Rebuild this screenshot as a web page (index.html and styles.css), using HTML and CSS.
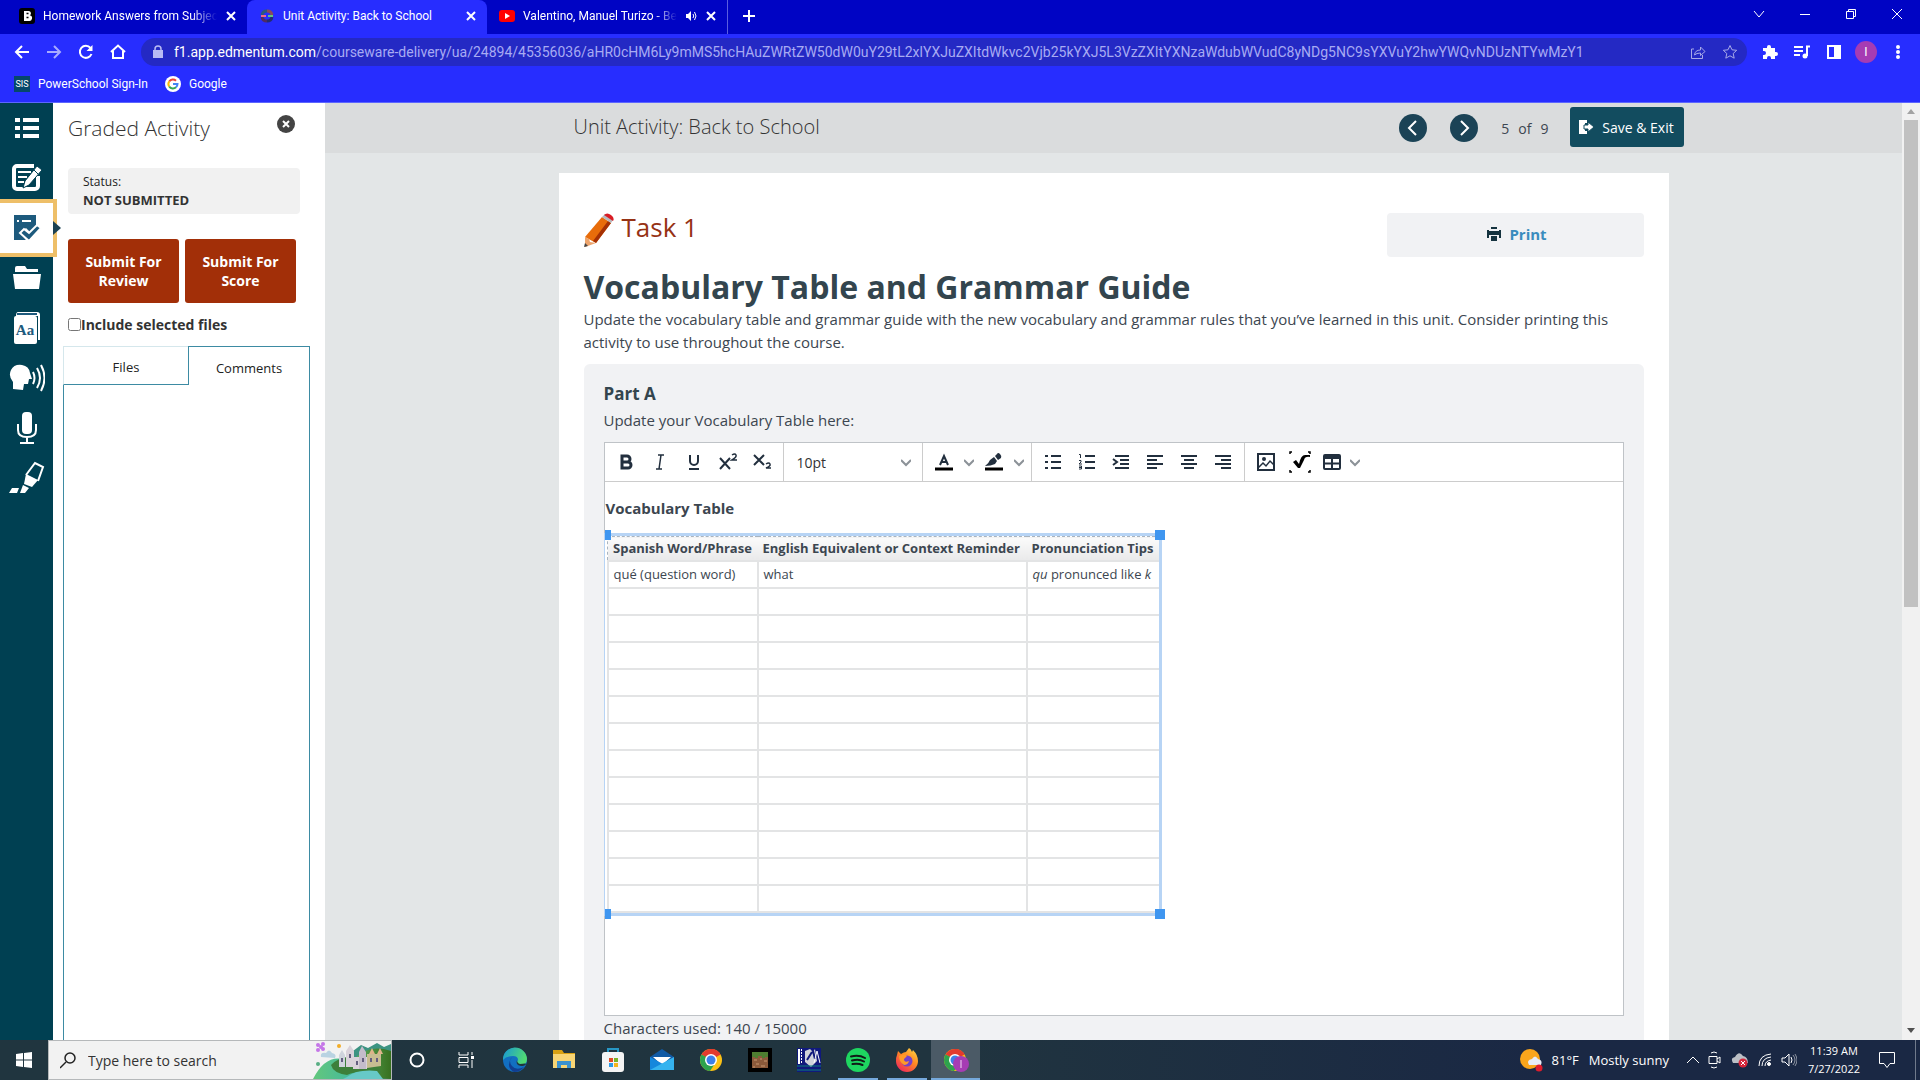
FILE: index.html
```html
<!DOCTYPE html>
<html lang="en">
<head>
<meta charset="utf-8">
<title>Unit Activity: Back to School</title>
<link rel="stylesheet" href="styles.css">
</head>
<body>
<header class="browser">
  <div class="tabstrip">
    <div class="tab">
      <svg class="favicon" viewBox="0 0 16 16"><rect width="16" height="16" rx="3" fill="#000"/><path d="M5 3h4.500a2.300 2.300 0 0 1 1.300 4.300A2.600 2.600 0 0 1 9.500 13H5z" fill="#fff"/><path d="M7.500 5.500h2M7.500 9.500h2" stroke="#000" stroke-width="1.500"/></svg>
      <span class="tab-title fade">Homework Answers from Subject</span>
      <button class="tab-close" aria-label="Close tab"><svg width="10" height="10" viewBox="0 0 10 10"><path d="M1 1l8 8M9 1l-8 8"/></svg></button>
    </div>
    <div class="tab active">
      <svg class="favicon" viewBox="0 0 16 16" fill="none" stroke-width="3"><path d="M3 7a5 5 0 0 1 5-4" stroke="#2c5a7c"/><path d="M8 3a5 5 0 0 1 5 4" stroke="#8a4a5a"/><path d="M13 9a5 5 0 0 1-5 4" stroke="#222c70"/><path d="M8 13a5 5 0 0 1-5-4" stroke="#4f2b63"/><path d="M2 8h5" stroke="#f0688f" stroke-width="2"/><path d="M9 8h5" stroke="#60c77c" stroke-width="2"/></svg>
      <span class="tab-title">Unit Activity: Back to School</span>
      <button class="tab-close" aria-label="Close tab"><svg width="10" height="10" viewBox="0 0 10 10"><path d="M1 1l8 8M9 1l-8 8"/></svg></button>
    </div>
    <div class="tab">
      <svg class="favicon" viewBox="0 0 16 16"><rect y="2" width="16" height="12" rx="3" fill="#f00"/><path d="M6 5l5 3-5 3z" fill="#fff"/></svg>
      <span class="tab-title fade">Valentino, Manuel Turizo - Be</span>
      <svg class="sound" width="12" height="12" viewBox="0 0 12 12"><path d="M1 4h2l3-3v10L3 8H1z" fill="#fff"/><path d="M8 4q1.500 2 0 4M9.500 2q3 4 0 8" stroke="#fff" fill="none"/></svg>
      <button class="tab-close" aria-label="Close tab"><svg width="10" height="10" viewBox="0 0 10 10"><path d="M1 1l8 8M9 1l-8 8"/></svg></button>
    </div>
    <button class="new-tab" aria-label="New tab"><svg width="12" height="12" viewBox="0 0 12 12"><path d="M6 0v12M0 6h12"/></svg></button>
    <div class="window-controls">
      <button aria-label="Search tabs"><svg width="12" height="12" viewBox="0 0 12 12"><path d="M1 3l5 6 5-6"/></svg></button>
      <button aria-label="Minimize"><svg width="12" height="12" viewBox="0 0 12 12"><path d="M1 6.500h10"/></svg></button>
      <button aria-label="Restore"><svg width="12" height="12" viewBox="0 0 12 12"><path d="M1.500 3.500h7v7h-7zM3.500 3.500v-2h7v7h-2"/></svg></button>
      <button aria-label="Close"><svg width="12" height="12" viewBox="0 0 12 12"><path d="M1 1l10 10M11 1L1 11"/></svg></button>
    </div>
  </div>
  <div class="navbar">
    <button aria-label="Back"><svg width="16" height="16" viewBox="0 0 16 16"><path d="M15 8H2M8 2L2 8l6 6"/></svg></button>
    <button class="dim" aria-label="Forward"><svg width="16" height="16" viewBox="0 0 16 16"><path d="M1 8h13M8 2l6 6-6 6"/></svg></button>
    <button aria-label="Reload"><svg width="16" height="16" viewBox="0 0 16 16"><path d="M13.500 10A6 6 0 1 1 12.500 4"/><path d="M14.500 1v6h-6z" fill="#fff" stroke="none"/></svg></button>
    <button aria-label="Home"><svg width="16" height="16" viewBox="0 0 16 16"><path d="M3 7v7h10V7M1 8l7-6.500L15 8"/></svg></button>
    <div class="address">
      <svg class="lock" width="10" height="14" viewBox="0 0 10 14"><path d="M0 5h10v8H0z" fill="#b9bbf4"/><path d="M2 5V4a3 3 0 0 1 6 0v1" stroke="#b9bbf4" stroke-width="1.500" fill="none"/></svg>
      <div class="url" role="textbox" aria-label="Address"><span class="host">f1.app.edmentum.com</span>/courseware-delivery/ua/24894/45356036/aHR0cHM6Ly9mMS5hcHAuZWRtZW50dW0uY29tL2xlYXJuZXItdWkvc2Vjb25kYXJ5L3VzZXItYXNzaWdubWVudC8yNDg5NC9sYXVuY2hwYWQvNDUzNTYwMzY1</div>
      <button class="dim" aria-label="Share"><svg width="16" height="16" viewBox="0 0 16 16"><path d="M4 5H1.500v9.500h11V11M4.500 11q.5-5 6-5V3l4.500 4.500-4.500 4V9q-4 0-6 2z"/></svg></button>
      <button class="dim" aria-label="Bookmark"><svg width="16" height="16" viewBox="0 0 16 16"><path d="M8 1.500l2 4.300 4.700.5-3.500 3.200 1 4.700L8 11.800l-4.200 2.400 1-4.700L1.300 6.300 6 5.800z"/></svg></button>
    </div>
    <button aria-label="Extensions"><svg width="16" height="16" viewBox="0 0 16 16"><path d="M1 4h4V3a2 2 0 0 1 4 0v1h4v4h1a2 2 0 0 1 0 4h-1v3H9v-1a2 2 0 0 0-4 0v1H1v-4h1a2 2 0 0 0 0-4H1z" fill="#fff" stroke="none"/></svg></button>
    <button aria-label="Media"><svg width="16" height="16" viewBox="0 0 16 16"><path d="M0 3h9M0 7h9M0 11h6M13 12V2.500h3"/><circle cx="11" cy="12" r="2.500" fill="#fff" stroke="none"/></svg></button>
    <button aria-label="Side panel"><svg width="16" height="16" viewBox="0 0 16 16"><path d="M2 2h12v12H2z"/><path d="M9 2h5v12H9z" fill="#fff"/></svg></button>
    <button aria-label="Profile"><span class="avatar">I</span></button>
    <button aria-label="Menu"><svg width="16" height="16" viewBox="0 0 16 16" fill="#fff"><circle cx="8" cy="3" r="1" /><circle cx="8" cy="8" r="1"/><circle cx="8" cy="13" r="1"/></svg></button>
  </div>
  <nav class="bookmarks">
    <a href="#"><span class="sis">SIS</span>PowerSchool Sign-In</a>
    <a href="#"><svg width="16" height="16" viewBox="0 0 16 16"><circle cx="8" cy="8" r="8" fill="#fff"/><g fill="none" stroke-width="2"><path d="M4.200 5.500A4.500 4.500 0 0 1 11 4.700" stroke="#ea4335"/><path d="M4.200 10.500a4.500 4.500 0 0 1 0-5" stroke="#fbbc05"/><path d="M4.200 10.500A4.500 4.500 0 0 0 11 11.300" stroke="#34a853"/><path d="M8 8h4.500a4.500 4.500 0 0 1-1.500 3.300" stroke="#4285f4"/></g></svg>Google</a>
  </nav>
</header>

<main class="app">
  <nav class="rail">
    <button aria-label="Outline"><svg width="24" height="22" viewBox="0 0 24 22" fill="#fff"><path d="M0 1h5v4H0zM8 1h16v4H8zM0 9h5v4H0zM8 9h16v4H8zM0 17h5v4H0zM8 17h16v4H8z"/></svg></button>
    <button aria-label="Notes"><svg width="32" height="30" viewBox="0 0 32 30"><path d="M23 3H6a3 3 0 0 0-3 3v17a3 3 0 0 0 3 3h18a3 3 0 0 0 3-3V13" fill="none" stroke="#fff" stroke-width="4"/><path d="M7 9h13M7 14h9M7 19h6" stroke="#fff" stroke-width="2"/><path d="M26 3l5 4-13 15-6 3 2-7z" fill="#fff" stroke="#004052"/><path d="M23 7l4 4" stroke="#004052"/></svg></button>
    <button class="current" aria-label="Graded activity"><svg width="28" height="28" viewBox="0 0 28 28"><path d="M1 1h22v11l-6 6-4-4-6 5 6 7H1z" fill="#1d5a7d"/><path d="M4 7h2M9 7h9" stroke="#fff" stroke-width="2"/><path d="M7 19l4-4 5 4 8-8 4 3-12 13z" fill="#1d5a7d" stroke="#fff" stroke-width="2"/></svg></button>
    <button aria-label="Files"><svg width="30" height="26" viewBox="0 0 30 26" fill="#fff"><path d="M3 5V3q0-2 2-2h8l2 3h11v3H3zM1 9h28l-2 15H3z"/></svg></button>
    <button aria-label="Dictionary"><svg width="28" height="34" viewBox="0 0 28 34"><path d="M5 1h19q3 0 3 3v25h-2V5H3q0-4 2-4z" fill="#fff"/><path d="M4 3h20" stroke="#1d5a7d" stroke-width="2"/><rect x="1" y="5" width="23" height="28" rx="2" fill="#fff"/><text x="12" y="24" text-anchor="middle" class="aa">Aa</text></svg></button>
    <button aria-label="Read aloud"><svg width="36" height="30" viewBox="0 0 36 30"><path d="M4 26v-7Q-1 13 2 7q3-6 11-5 7 1 8 8l2 6h-3l-1 5h-4l-1 6z" fill="#fff"/><path d="M24 9q3 6 0 12M28 5q6 10 0 20M32 2q7 13 0 26" fill="none" stroke="#fff" stroke-width="2"/></svg></button>
    <button aria-label="Record"><svg width="22" height="34" viewBox="0 0 22 34"><rect x="6" y="1" width="10" height="22" rx="4" fill="#fff"/><path d="M2 13v6q0 7 9 7t9-7v-6M11 26v6M4 32h14" fill="none" stroke="#fff" stroke-width="2"/></svg></button>
    <button aria-label="Highlighter"><svg width="36" height="34" viewBox="0 0 36 34"><path d="M17 14L26 2l8 4-5 14" fill="none" stroke="#fff" stroke-width="2"/><path d="M17 13l12 6-6 7-8-3z" fill="#fff"/><path d="M14 24l6 3-4 5h-5zM3 27h7l-2 5H0z" fill="#fff"/></svg></button>
  </nav>

  <aside class="panel">
    <div class="panel-head">
      <h2>Graded Activity</h2>
      <button aria-label="Close panel"><svg width="18" height="18" viewBox="0 0 18 18"><circle cx="9" cy="9" r="9" fill="#444"/><path d="M6 6l6 6M12 6l-6 6" stroke="#fff" stroke-width="2"/></svg></button>
    </div>
    <div class="status"><span>Status:</span><strong>NOT SUBMITTED</strong></div>
    <div class="submit-row"><button>Submit For Review</button><button>Submit For Score</button></div>
    <label class="include"><input type="checkbox">Include selected files</label>
    <div class="panel-tabs"><button>Files</button><button class="selected">Comments</button></div>
    <div class="panel-body"></div>
  </aside>

  <section class="content">
    <header class="page-head">
      <div class="head-inner">
        <h1>Unit Activity: Back to School</h1>
        <button class="round" aria-label="Previous"><svg width="28" height="28" viewBox="0 0 28 28"><path d="M17 7l-7 7 7 7"/></svg></button>
        <button class="round" aria-label="Next"><svg width="28" height="28" viewBox="0 0 28 28"><path d="M11 7l7 7-7 7"/></svg></button>
        <span class="count"><span>5</span><span>of</span><span>9</span></span>
        <button class="save"><svg width="15" height="14" viewBox="0 0 15 14" fill="#fff"><path d="M0 0h8v3H6v8h2v3H0z"/><path d="M5 5h4V2l6 5-6 5V9H5z" stroke="#124c5f"/></svg>Save &amp; Exit</button>
      </div>
    </header>
    <article class="sheet">
      <div class="task-row">
        <h2><svg width="30" height="34" viewBox="0 0 30 34"><path d="M1 24L18 4l9 6-15 20z" fill="#e86c0a"/><path d="M9 28L24 8l3 2-15 20z" fill="#a53005"/><path d="M1 24l4 2 1 3 6 1-11 4z" fill="#eda46c"/><path d="M18 4l3-3 8 6-2 3z" fill="#b8b8bd"/><path d="M20 2q3-3 7 0t2 6z" fill="#d91c24"/><path d="M0 34l1-4 3 3z" fill="#444"/></svg>Task 1</h2>
        <button class="print"><svg width="14" height="14" viewBox="0 0 14 14" fill="#15333f"><path d="M4 0h6v2H4zM0 3h2v1h10V3h2v8h-2V8H2v3H0zM4 9h6v5H4z"/><path d="M2 4h10v3H2z"/></svg>Print</button>
      </div>
      <h3>Vocabulary Table and Grammar Guide</h3>
      <p class="intro">Update the vocabulary table and grammar guide with the new vocabulary and grammar rules that you’ve learned in this unit. Consider printing this activity to use throughout the course.</p>
      <div class="part">
        <h4>Part A</h4>
        <p>Update your Vocabulary Table here:</p>
        <div class="editor">
          <div class="toolbar">
            <div class="group">
              <button aria-label="Bold"><svg width="24" height="24" viewBox="0 0 24 24"><path d="M8 6h5a3 3 0 0 1 0 6H8zM8 12h6a3 3 0 0 1 0 6H8z" stroke-width="3"/></svg></button>
              <button aria-label="Italic"><svg width="24" height="24" viewBox="0 0 24 24"><path d="M10 5h6M8 19h6M13 5l-2 14" stroke-width="1.500"/></svg></button>
              <button aria-label="Underline"><svg width="24" height="24" viewBox="0 0 24 24"><path d="M8 5v6a4 4 0 0 0 8 0V5M7 19h10"/></svg></button>
              <button aria-label="Superscript"><svg width="24" height="24" viewBox="0 0 24 24"><path d="M4 8l10 11M14 8L4 19"/><path d="M16 5q3-2 4 0t-4 5h5" stroke-width="1.500"/></svg></button>
              <button aria-label="Subscript"><svg width="24" height="24" viewBox="0 0 24 24"><path d="M4 5l10 10M14 5L4 15"/><path d="M16 14q3-2 4 0t-4 4h5" stroke-width="1.500"/></svg></button>
            </div>
            <div class="group size">
              <select aria-label="Font size"><option>10pt</option></select>
              <svg width="10" height="10" viewBox="0 0 10 10"><path d="M0 3l5 5 5-5"/></svg>
            </div>
            <div class="group">
              <button aria-label="Text colour"><svg width="24" height="24" viewBox="0 0 24 24"><path d="M3 19h18" stroke="#000" stroke-width="3"/><path d="M8 15l4-9 4 9M10 12h5"/></svg></button>
              <button class="more" aria-label="More text colours"><svg width="10" height="10" viewBox="0 0 10 10"><path d="M0 3l5 5 5-5"/></svg></button>
              <button aria-label="Highlight colour"><svg width="24" height="24" viewBox="0 0 24 24"><path d="M3 19h18" stroke="#000" stroke-width="3"/><path d="M13 6l3 4 3-2q1-2-1-4t-3 0zM12 7l3 4-2 3q-4 2-10 2 4-3 5-6z" fill="#222f3e" stroke="none"/></svg></button>
              <button class="more" aria-label="More highlight colours"><svg width="10" height="10" viewBox="0 0 10 10"><path d="M0 3l5 5 5-5"/></svg></button>
            </div>
            <div class="group">
              <button aria-label="Bullet list"><svg width="24" height="24" viewBox="0 0 24 24"><path d="M4 6h3M4 12h3M4 18h3M10 6h10M10 12h10M10 18h10"/></svg></button>
              <button aria-label="Numbered list"><svg width="24" height="24" viewBox="0 0 24 24"><path d="M10 6h10M10 12h10M10 18h10"/><path d="M4 4.500h1.500V8M4 10.500h2v1.500L4 14h3M4 16h2.500v3H4M4 17.500h2" stroke-width="1"/></svg></button>
              <button aria-label="Indent"><svg width="24" height="24" viewBox="0 0 24 24"><path d="M6 6h14M11 10h9M11 14h9M6 18h14M4 9l4 3-4 3"/></svg></button>
              <button aria-label="Align left"><svg width="24" height="24" viewBox="0 0 24 24"><path d="M4 6h16M4 10h10M4 14h16M4 18h10"/></svg></button>
              <button aria-label="Align centre"><svg width="24" height="24" viewBox="0 0 24 24"><path d="M4 6h16M7 10h10M4 14h16M7 18h10"/></svg></button>
              <button aria-label="Align right"><svg width="24" height="24" viewBox="0 0 24 24"><path d="M4 6h16M10 10h10M4 14h16M10 18h10"/></svg></button>
            </div>
            <div class="group insert">
              <button aria-label="Insert image"><svg width="24" height="24" viewBox="0 0 24 24"><path d="M4 4h16v16H4z"/><circle cx="10" cy="9" r="2" fill="#222f3e" stroke="none"/><path d="M4 18l5-5 3 3 4-5 4 4" stroke-width="1.500"/></svg></button>
              <button aria-label="Insert formula"><svg width="24" height="24" viewBox="0 0 24 24"><path d="M2 4V2h2M20 2h2v2M2 20v2h2M20 22h2v-2" stroke="#000" stroke-width="1.500"/><path d="M5 12l3-2 3 4q2-10 7-9h4v2q-5-1-6 3l-4 8h-2z" fill="#000" stroke="none"/></svg></button>
              <button class="narrow" aria-label="Insert table"><svg width="24" height="24" viewBox="0 0 24 24"><rect x="4" y="5" width="16" height="14" rx="1"/><path d="M4 7h16" stroke-width="4"/><path d="M12 8v11M4 13.500h16"/></svg></button>
              <button class="more" aria-label="Table options"><svg width="10" height="10" viewBox="0 0 10 10"><path d="M0 3l5 5 5-5"/></svg></button>
            </div>
          </div>
          <div class="document">
            <h5>Vocabulary Table</h5>
            <div class="table-wrap">
              <table>
                <colgroup><col class="c-word"><col class="c-english"><col class="c-tips"></colgroup>
                <thead><tr><th>Spanish Word/Phrase</th><th>English Equivalent or Context Reminder</th><th>Pronunciation Tips</th></tr></thead>
                <tbody>
                  <tr><td>qué (question word)</td><td>what</td><td><i>qu</i> pronunced like <i>k</i></td></tr>
                  <tr><td></td><td></td><td></td></tr>
                  <tr><td></td><td></td><td></td></tr>
                  <tr><td></td><td></td><td></td></tr>
                  <tr><td></td><td></td><td></td></tr>
                  <tr><td></td><td></td><td></td></tr>
                  <tr><td></td><td></td><td></td></tr>
                  <tr><td></td><td></td><td></td></tr>
                  <tr><td></td><td></td><td></td></tr>
                  <tr><td></td><td></td><td></td></tr>
                  <tr><td></td><td></td><td></td></tr>
                  <tr><td></td><td></td><td></td></tr>
                  <tr><td></td><td></td><td></td></tr>
                </tbody>
              </table>
              <div class="frame"></div>
              <span class="handle tl"></span><span class="handle tr"></span><span class="handle bl"></span><span class="handle br"></span>
            </div>
          </div>
        </div>
        <p class="used">Characters used: 140 / 15000</p>
      </div>
    </article>
  </section>
  <div class="scrollbar">
    <svg width="18" height="17" viewBox="0 0 18 17"><path d="M5 11l4-5 4 5z" fill="#a3a3a3"/></svg>
    <div class="thumb"></div>
    <svg width="18" height="17" viewBox="0 0 18 17"><path d="M5 6l4 5 4-5z" fill="#505050"/></svg>
  </div>
</main>

<footer class="taskbar">
  <button class="start" aria-label="Start"><svg width="16" height="16" viewBox="0 0 16 16" fill="#fff"><path d="M0 2l7-1v6.500H0zM8 1l8-1v7.500H8zM0 8.500h7V15l-7-1zM8 8.500h8V16l-8-1z"/></svg></button>
  <label class="search">
    <svg width="16" height="17" viewBox="0 0 16 17"><circle cx="10" cy="6" r="5" fill="none" stroke="#222" stroke-width="1.500"/><path d="M6 10l-6 6" stroke="#222" stroke-width="1.500"/></svg>
    <input type="text" placeholder="Type here to search" aria-label="Search">
    <svg class="castle" width="78" height="38" viewBox="0 0 78 38"><defs><linearGradient id="hill" x2="1"><stop stop-color="#5fae62"/><stop offset="1" stop-color="#37701f"/></linearGradient><linearGradient id="river" x2="1"><stop stop-color="#63c77c"/><stop offset="1" stop-color="#2fb0b4"/></linearGradient></defs><path d="M30 22l10-12 8-6 7 3 9-5 7 4 7-3v35H30z" fill="#3c9382"/><path d="M40 36V20q14-18 38-10v28z" fill="url(#hill)"/><path d="M0 38Q12 14 30 18l18 10q16 0 19 10z" fill="url(#river)"/><path d="M18 24q12-12 28-6 20 2 22 14-22-4-34 2-14-2-16-10z" fill="#3d7f3a"/><path d="M26 14l3-5 3 5v12h-6z" fill="#cfd4dc"/><path d="M33 10l4-6 4 6v16h-8zM40 16h14v12H40z" fill="#d9d2da"/><path d="M46 11l3-6 4 6v17h-7z" fill="#c4bccb"/><path d="M54 13h14v12l-14 2z" fill="#c8bd92"/><path d="M56 13l3-6 3 6zM64 13l3-6 3 6z" fill="#ddb48a"/><path d="M29 17v4M37 13v4M44 20v4M50 17v4M58 17v4M64 17v4" stroke="#645e80" stroke-width="2"/><path d="M34 36q10-8 30-6l6 8H30z" fill="#67c9c7"/><path d="M8 16q-1-5 5-4 3-5 6 0 5 1 3 5z" fill="#b9d3e2"/><g fill="#c575e8"><circle cx="5" cy="4" r="2"/><circle cx="10" cy="3" r="2"/><circle cx="5" cy="9" r="2"/><circle cx="10" cy="8" r="2"/><circle cx="8" cy="6" r="2"/></g><circle cx="26" cy="5" r="2" fill="#f3ad28"/><circle cx="5" cy="23" r="2" fill="#58ae84"/></svg>
  </label>
  <div class="pinned">
    <button aria-label="Cortana"><svg width="16" height="16" viewBox="0 0 16 16"><circle cx="8" cy="8" r="6.500" fill="none" stroke="#fff" stroke-width="2"/></svg></button>
    <button aria-label="Task view"><svg width="18" height="16" viewBox="0 0 18 16"><path d="M2 0v3h9V0M2 16v-3h9v3M2 5.500h9v5H2zM15 0v3M15 8v8" fill="none" stroke="#fff" stroke-width="1"/><path d="M14 4h3v3h-3z" fill="#fff"/></svg></button>
    <button aria-label="Edge"><svg width="26" height="26" viewBox="0 0 26 26"><defs><linearGradient id="edge" x2="1" y2=".3"><stop stop-color="#1797d6"/><stop offset="1" stop-color="#50da74"/></linearGradient></defs><circle cx="13" cy="13" r="12" fill="#126fc1"/><path d="M1 13A12 12 0 0 1 25 12q0 6-7 6-5-1-2-5 0-4-5-4Q4 9 1 13z" fill="url(#edge)"/><path d="M10 10q-4 4 0 9 4 5 12 1-4 5-10 5Q3 20 10 10z" fill="#123e91"/><path d="M15 13q-2 5 4 6 4 0 5-2 0-1-6 0-3-1-3-4z" fill="#20343e"/></svg></button>
    <button aria-label="File Explorer"><svg width="24" height="22" viewBox="0 0 24 22"><path d="M1 1h9l2 3h11v5H1z" fill="#d9a113"/><path d="M1 5h22v14H1z" fill="#f8d574"/><path d="M5 19v-7h14v7h-4v-3H9v3z" fill="#3c92cf"/></svg></button>
    <button aria-label="Store"><svg width="24" height="26" viewBox="0 0 24 26"><path d="M7 7V2h10v5" fill="none" stroke="#2797c5" stroke-width="2"/><rect x="1" y="5" width="22" height="20" rx="3" fill="#f4f4f4"/><path d="M8 11h4v4H8z" fill="#e34b25"/><path d="M13 11h4v4h-4z" fill="#79b528"/><path d="M8 16h4v4H8z" fill="#2c9be8"/><path d="M13 16h4v4h-4z" fill="#f5b51b"/></svg></button>
    <button aria-label="Mail"><svg width="24" height="24" viewBox="0 0 24 24"><path d="M0 9l12-8 12 8v13H0z" fill="#105aa5"/><path d="M3 9h18l-9 8z" fill="#fff"/><path d="M0 9l24 13H0z" fill="#1587dc"/><path d="M24 9L0 22h24z" fill="#35b3ef"/></svg></button>
    <button aria-label="Chrome"><svg width="24" height="24" viewBox="0 0 24 24"><g id="chrome-mark"><circle cx="12" cy="12" r="11" fill="#fbc116"/><path d="M12 12L2.500 6.500A11 11 0 0 1 21.500 6.500z" fill="#e33b2e"/><path d="M12 1a11 11 0 0 1 9.500 5.500H12z" fill="#e33b2e"/><path d="M2.500 6.500A11 11 0 0 0 11 23l6-9z" fill="#2da34d"/><circle cx="12" cy="12" r="6" fill="#fff"/><circle cx="12" cy="12" r="4.500" fill="#3c80ea"/></g></svg></button>
    <button aria-label="Minecraft"><svg width="24" height="24" viewBox="0 0 24 24"><path d="M0 0h24v24H0z"/><path d="M4 8h16v12H4z" fill="#8b5a3b"/><path d="M4 4h16v5h-3v1h-3V8h-4v2H7V9H4z" fill="#4e7d30"/><path d="M6 12h3M12 11h2M16 13h3M8 16h3M13 18h4M5 19h2" stroke="#a97855" stroke-width="2"/></svg></button>
    <button aria-label="Drawing tools"><svg width="24" height="24" viewBox="0 0 24 24"><path d="M0 0h24v24H0z" fill="#10197c"/><path d="M2 1v15M4 2h1M4 5h1M4 8h1M4 11h1M4 14h1" stroke="#fff" stroke-width="2"/><path d="M8 3l5-2 3 3 2-3 2 12-6 6-6-5z" fill="#d0d3da"/><path d="M10 12l5-8M16 3l2 8" stroke="#10197c" stroke-width="2"/><path d="M20 3l3 12M20 3l-3 12" stroke="#fff"/><path d="M0 18h24M0 22h24" stroke="#0c8078" stroke-width="1"/></svg></button>
    <button class="running" aria-label="Spotify"><svg width="24" height="24" viewBox="0 0 24 24"><circle cx="12" cy="12" r="12" fill="#1ed760"/><path d="M5 8.500q8-2 14 1.500M6 12.500q7-2 12 1M6.500 16q6-1 10 1" fill="none" stroke="#101c17" stroke-width="2" stroke-linecap="round"/></svg></button>
    <button class="running" aria-label="Firefox"><svg width="24" height="24" viewBox="0 0 24 24"><defs><linearGradient id="fox" x1="1" y2="1" x2=".3"><stop stop-color="#ffe14a"/><stop offset=".5" stop-color="#ff8a22"/><stop offset="1" stop-color="#f02d58"/></linearGradient></defs><path d="M2 7l1-4 3 3q3-2 5-2l3-4q2 1 3 4l1-2q5 5 5 11a11 11 0 0 1-22 0q0-4 1-6z" fill="url(#fox)"/><circle cx="12" cy="13" r="5.500" fill="#7541c9"/><path d="M4 8q5-3 8 0l-3 3q0 4 5 2-1 4-5 4-5-3-5-9z" fill="#ff9a28"/></svg></button>
    <button class="running current" aria-label="Chrome profile window"><svg width="26" height="24" viewBox="0 0 26 24"><use href="#chrome-mark"/><circle cx="18" cy="16" r="8" fill="#a63cb3"/><path d="M18 12v8" stroke="#f2d9f4"/></svg></button>
  </div>
  <div class="tray">
    <svg width="24" height="24" viewBox="0 0 24 24"><circle cx="11" cy="11" r="10" fill="#f9a51c"/><path d="M10 17q-3-5 3-6 3-5 6 0 5 1 3 6z" fill="#e7ebf6"/><circle cx="20" cy="20" r="3.500" fill="#dd1c2c"/></svg>
    <span class="weather"><span>81°F</span><span>Mostly sunny</span></span>
    <svg width="12" height="12" viewBox="0 0 12 12" class="line"><path d="M0 9l6-6 6 6"/></svg>
    <svg width="14" height="18" viewBox="0 0 14 18" class="line"><path d="M1 5.500h8v7H1zM9 8l3-2v6l-3-2M3 2q3-2 6 0M3 16q3 2 6 0"/></svg>
    <svg width="18" height="16" viewBox="0 0 18 16"><path d="M2 11q-3-5 2-6 4-7 8-1 5 1 5 7z" fill="#bcc0c6"/><circle cx="12" cy="11" r="4.500" fill="#d6263b"/><path d="M10 9l4 4M14 9l-4 4" stroke="#fff"/></svg>
    <svg width="14" height="14" viewBox="0 0 14 14" class="line"><path d="M1 13Q1 2 13 1M4 13q0-8 9-9M7 13q0-5 6-6"/><circle cx="11" cy="11" r="1.500" fill="#fff"/></svg>
    <svg width="16" height="14" viewBox="0 0 16 14" class="line"><path d="M1 5h3l4-4v12L4 9H1zM10 4q2 3 0 6"/><path d="M12 2q4 5 0 10M14 1q4 6 0 12" opacity=".5"/></svg>
    <time class="clock"><span>11:39 AM</span><span>7/27/2022</span></time>
    <svg width="16" height="16" viewBox="0 0 16 16" class="line"><path d="M.5.500h15v11H11l-3 4-3-4H.500z"/></svg>
  </div>
  <button class="show-desktop" aria-label="Show desktop"></button>
</footer>
</body>
</html>
```
FILE: styles.css
```css
* { box-sizing: border-box; }
body { margin: 0; height: 100vh; display: flex; flex-direction: column; overflow: hidden; font-family: "Open Sans", "Noto Sans", sans-serif; color: #3c4650; }
h1, h2, h3, h4, h5, p { margin: 0; }
button { font: inherit; border: 0; padding: 0; background: none; color: inherit; display: flex; align-items: center; justify-content: center; }
svg { flex: none; display: block; }

/* Browser */
.browser { flex: none; background: #272dff; color: #fff; font-family: Roboto, "Open Sans", sans-serif; font-size: 12px; border-bottom: 1px solid #5c66ff; }
.browser button svg { stroke: #fff; fill: none; stroke-width: 2; }
.tabstrip { height: 34px; background: #0004c4; display: flex; align-items: stretch; padding-left: 7px; }
.tab { width: 240px; display: flex; align-items: center; gap: 8px; padding: 0 10px 2px 12px; }
.tab.active { background: #272dff; border-radius: 8px 8px 0 0; }
.favicon { width: 16px; height: 16px; }
.tab-title { flex: 1; white-space: nowrap; overflow: hidden; }
.fade { -webkit-mask-image: linear-gradient(90deg, #000 85%, transparent); mask-image: linear-gradient(90deg, #000 85%, transparent); }
.tab-close { width: 12px; }
.new-tab { width: 42px; padding-bottom: 2px; border-left: 1px solid #5a5ee0; }
.window-controls { margin-left: auto; display: flex; padding-bottom: 6px; }
.window-controls button { width: 46px; }
.browser .window-controls svg { stroke-width: 1; }
.navbar { height: 36px; display: flex; align-items: center; padding: 0 6px; }
.navbar button { width: 32px; height: 28px; }
.navbar .dim { opacity: .6; }
.address { flex: 1; min-width: 0; height: 28px; border-radius: 14px; background: #2429c4; display: flex; align-items: center; margin: 0 7px; padding: 0 1px 0 12px; }
.address .dim svg { stroke-width: 1; }
.url { flex: 1; min-width: 0; margin-left: 11px; font-size: 14px; white-space: nowrap; overflow: hidden; color: #a8abf3; }
.host { color: #fff; }
.avatar { width: 22px; height: 22px; border-radius: 50%; background: #a63cb3; font-size: 12px; line-height: 22px; }
.bookmarks { height: 32px; display: flex; align-items: center; gap: 17px; padding: 0 0 4px 14px; }
.bookmarks a { color: #fff; text-decoration: none; display: flex; align-items: center; gap: 8px; }
.sis { width: 16px; height: 16px; background: #05476b; font-size: 9px; line-height: 16px; text-align: center; }

/* App shell */
.app { flex: 1; min-height: 0; display: flex; }
.rail { flex: none; width: 53px; background: #004052; display: flex; flex-direction: column; position: relative; z-index: 1; }
.rail button { height: 50px; }
.rail .current { position: relative; background: #fff; outline: 4px solid #eebf68; }
.rail .current::after { content: ""; position: absolute; left: 100%; top: 18px; border: 7px solid transparent; border-left: 8px solid #1b4153; border-right: 0; }
.aa { font: bold 15px "Liberation Serif", serif; fill: #1d5a7d; }

.panel { flex: none; width: 272px; background: #fff; display: flex; flex-direction: column; padding: 0 15px 0 10px; }
.panel-head { display: flex; justify-content: space-between; padding: 12px 15px 0 5px; height: 65px; align-items: flex-start; }
.panel-head h2 { font-size: 21px; line-height: 26px; font-weight: 300; color: #333; }
.status { margin: 0 10px 0 5px; height: 46px; border-radius: 4px; background: #f1f1f1; padding: 5px 15px; display: flex; flex-direction: column; font-size: 12px; line-height: 18px; color: #222; }
.status strong { font-size: 13px; color: #333; }
.submit-row { display: flex; gap: 6px; margin: 25px 14px 0 5px; }
.submit-row button { flex: 1; height: 64px; border-radius: 3px; background: #a22f08; color: #fff; font-size: 14px; font-weight: 700; line-height: 19px; padding: 0 16px; }
.include { display: flex; align-items: center; margin: 10px 0 0 5px; height: 22px; font-size: 14px; font-weight: 700; color: #333; }
.include input { margin: 0; width: 13px; height: 13px; }
.panel-tabs { display: flex; margin-top: 11px; height: 39px; }
.panel-tabs button { width: 125px; font-size: 13px; padding-top: 3px; color: #222; border: 1px solid #d5e7ec; border-bottom-color: #3d8ba3; border-right: 0; }
.panel-tabs .selected { flex: 1; border: 1px solid #3d8ba3; border-bottom: 0; }
.panel-body { flex: 1; border: 1px solid #3d8ba3; border-width: 0 1px; }

.content { flex: 1; min-width: 0; background: #e3e6e7; display: flex; flex-direction: column; overflow: hidden; }
.page-head { flex: none; height: 50px; background: #dadcdd; }
.head-inner { max-width: 1110px; margin: 0 auto; height: 50px; padding-left: 15px; display: flex; align-items: center; }
.head-inner h1 { flex: 1; font-size: 20px; line-height: 26px; padding-bottom: 2px; font-weight: 300; color: #333; }
.round { width: 28px; height: 28px; border-radius: 50%; background: #1b4356; margin-right: 23px; }
.round svg { fill: none; stroke: #fff; stroke-width: 2; }
.count { display: flex; gap: 9px; font-size: 14px; margin-right: 21px; }
.save { height: 40px; width: 114px; margin: 0 -15px 6px 0; align-self: flex-end; border-radius: 3px; background: #124c5f; color: #fff; font-size: 14px; gap: 8px; }
.sheet { flex: none; width: 100%; max-width: 1110px; margin: 20px auto 0; background: #fff; padding: 40px 25px; }
.task-row { display: flex; justify-content: space-between; height: 44px; }
.task-row h2 { display: flex; gap: 8px; align-items: flex-start; font-size: 26px; line-height: 28px; font-weight: 400; color: #963214; }
.print { width: 257px; background: #f1f2f4; border-radius: 4px; color: #3a8cbe; font-size: 15px; font-weight: 700; gap: 8px; padding: 0 0 2px 4px; }
.sheet h3 { margin-top: 8px; font-size: 32px; line-height: 43px; color: #33454e; }
.intro { font-size: 15px; line-height: 23px; }
.part { margin-top: 10px; background: #f1f2f4; border-radius: 6px; padding: 17px 20px 30px; font-size: 15px; line-height: 26px; }
.part h4 { font-size: 17px; line-height: 26px; color: #33454e; }
.editor { margin-top: 9px; border: 1px solid #bfc3c7; background: #fff; }
.toolbar { display: flex; height: 39px; border-bottom: 1px solid #ccc; }
.group { display: flex; align-items: stretch; padding: 0 4px; border-right: 1px solid #ccc; }
.group:last-child { border-right: 0; }
.group button { width: 34px; }
.group svg { fill: none; stroke: #222f3e; stroke-width: 2; }
.group .narrow { width: 30px; }
.group .more { width: 16px; }
.group .more svg, .size svg { stroke: #8c9298; }
.size { width: 139px; align-items: center; padding: 0 11px 0 13px; }
.size select { flex: 1; appearance: none; border: 0; background: none; padding: 0; font: 14px "Open Sans", sans-serif; color: #333; }
.document { min-height: 533px; padding: 13px 1px; }
.document h5 { font-size: 15px; line-height: 26px; color: #3c4650; }
.table-wrap { position: relative; width: 552px; margin: 15px 0 0 1px; }
table { width: 100%; table-layout: fixed; border-collapse: collapse; font-size: 13px; line-height: 18px; }
.c-word { width: 150px; }
.c-english { width: 269px; }
.c-tips { width: 133px; }
th, td { height: 27px; padding: 0 5px; text-align: left; white-space: nowrap; }
th { height: 24px; background: linear-gradient(#fbfbfb, #e9e9ea); border-top: 1px dashed #a9b4bf; }
th:first-child { border-left: 1px dashed #a9b4bf; }
th:last-child { border-right: 1px dashed #a9b4bf; }
td { border: 2px solid #e3e4e5; }
.frame { position: absolute; inset: -3px; border: 3px solid #b7d4f5; border-left-width: 1px; }
.handle { position: absolute; width: 10px; height: 10px; background: #3f96f0; }
.tl { left: -2px; top: -6px; width: 6px; }
.tr { right: -6px; top: -6px; }
.bl { left: -2px; bottom: -6px; width: 6px; }
.br { right: -6px; bottom: -6px; }
.used { line-height: 24px; }

.scrollbar { flex: none; width: 18px; background: #f1f1f1; display: flex; flex-direction: column; justify-content: space-between; padding: 0 0 1px; }
.thumb { width: 14px; height: 52%; margin: 0 2px auto; background: #c1c1c1; }

/* Taskbar */
.taskbar { flex: none; height: 40px; display: flex; background: linear-gradient(90deg, #20353f, #20343f 50%, #1a2844 80%); color: #fff; }
.start { width: 48px; }
.search { width: 344px; background: #f2f2f2; border: 1px solid #b5b8ba; display: flex; align-items: center; padding-left: 11px; gap: 12px; }
.search input { flex: 1; min-width: 0; border: 0; background: none; padding: 0; font: 14px "Open Sans", sans-serif; }
.search input::placeholder { color: #333; opacity: 1; }
.pinned { display: flex; }
.pinned button { width: 49px; }
.running { background: linear-gradient(#76a9dc, #76a9dc) center bottom / 40px 2px no-repeat; }
.pinned .running { background: linear-gradient(#76a9dc, #76a9dc) center bottom / 40px 2px no-repeat; }
.pinned .current { background: #4b5a66; box-shadow: inset 0 -2px #76a9dc; }
.tray { margin-left: auto; display: flex; align-items: center; gap: 9px; padding-right: 20px; font-size: 13px; }
.weather { display: flex; gap: 10px; margin-right: 9px; }
.line { fill: none; stroke: #fff; stroke-width: 1; }
.clock { display: flex; flex-direction: column; text-align: center; font-size: 11px; line-height: 18px; margin: 0 10px 0 2px; }
.show-desktop { width: 5px; border-left: 1px solid #707a8c; }
```
